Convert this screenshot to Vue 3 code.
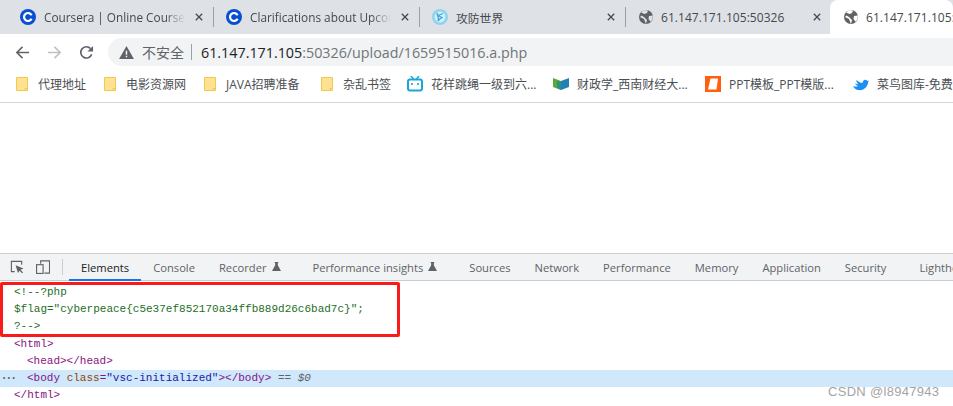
<script setup>
const tabs = [
  { title: 'Coursera | Online Courses & Credentials', icon: 'c' },
  { title: 'Clarifications about Upcoming', icon: 'c' },
  { title: '攻防世界', icon: 'w' },
  { title: '61.147.171.105:50326', icon: 'g' },
]
const marks = [
  { text: '代理地址', icon: 'folder', cls: 'm1' },
  { text: '电影资源网', icon: 'folder', cls: 'm2' },
  { text: 'JAVA招聘准备', icon: 'folder', cls: 'm3' },
  { text: '杂乱书签', icon: 'folder', cls: 'm4' },
  { text: '花样跳绳一级到六...', icon: 'tv', cls: 'm5' },
  { text: '财政学_西南财经大...', icon: 'book', cls: 'm6' },
  { text: 'PPT模板_PPT模版...', icon: 'ppt', cls: 'm7' },
  { text: '菜鸟图库-免费', icon: 'bird', cls: 'm8' },
]
const dtabs = [
  { t: 'Elements', active: true },
  { t: 'Console' },
  { t: 'Recorder', flask: true },
  { t: 'Performance insights', flask: true },
  { t: 'Sources' },
  { t: 'Network' },
  { t: 'Performance' },
  { t: 'Memory' },
  { t: 'Application' },
  { t: 'Security' },
  { t: 'Lighthouse', last: true },
]
</script>

<template>
  <div class="page">
    <div class="tabstrip">
      <div v-for="(t, i) in tabs" :key="i" class="tab">
        <svg v-if="t.icon === 'c'" class="fav" viewBox="0 0 16 16"><circle cx="8" cy="8" r="8" fill="#0a4fd0"/><path d="M11.600 6.200A4 4 0 1 0 11.600 9.800" fill="none" stroke="#fff" stroke-width="2.200"/></svg>
        <svg v-else-if="t.icon === 'w'" class="fav" viewBox="0 0 16 16"><circle cx="8" cy="8" r="8" fill="#8fd3ee"/><circle cx="8" cy="8" r="5.400" fill="#d5f0f9"/><path d="M11 4.500 6 6.500l4 2-4.500 3M5 4l2 8" fill="none" stroke="#3ca9d8" stroke-width="1.300"/></svg>
        <svg v-else class="fav" viewBox="0 0 16 16"><circle cx="8" cy="8" r="7" fill="#5f6368"/><path d="M3 3.500 6.500 5 9 4l1-2.600L6 1zM2 8l4 2 1 2.500L8 15 9 11 6 8 3.500 6.500zM11 7l3.800-.5-.3 4-2 2.200L10.500 10z" fill="#dee1e6"/></svg>
        <span class="tab-title" :class="{ fade: i < 2, num: i === 3 }">{{ t.title }}</span>
        <svg class="close" viewBox="0 0 10 10"><path d="M1 1l8 8M9 1l-8 8" stroke="#45494d" stroke-width="1.600"/></svg>
      </div>
      <div class="tab active">
        <svg class="fav" viewBox="0 0 16 16"><circle cx="8" cy="8" r="7" fill="#5f6368"/><path d="M3 3.500 6.500 5 9 4l1-2.600L6 1zM2 8l4 2 1 2.500L8 15 9 11 6 8 3.500 6.500zM11 7l3.800-.5-.3 4-2 2.200L10.500 10z" fill="#fff"/></svg>
        <span class="tab-title num">61.147.171.105:50326/upload</span>
      </div>
    </div>

    <div class="toolbar">
      <svg class="nav" viewBox="0 0 16 16"><path d="M15 8H2M8 2 2 8l6 6" fill="none" stroke="#5f6368" stroke-width="1.700"/></svg>
      <svg class="nav" viewBox="0 0 16 16"><path d="M1 8h13M8 2l6 6-6 6" fill="none" stroke="#bdc1c6" stroke-width="1.700"/></svg>
      <svg class="nav" viewBox="0 0 16 16"><path d="M13.500 10A6 6 0 1 1 12.300 3.800" fill="none" stroke="#5f6368" stroke-width="1.800"/><path d="M15 1v6H9z" fill="#5f6368"/></svg>
      <div class="omni">
        <svg class="warn" viewBox="0 0 16 14"><path d="M8 0 16 14H0z" fill="#5f6368"/><path d="M7.200 5h1.600v4.500H7.200zM7.200 10.500h1.600v1.600H7.200z" fill="#f1f3f4"/></svg>
        <span class="insecure">不安全</span>
        <span class="divider"></span>
        <span class="url"><b>61.147.171.105</b>:50326/upload/1659515016.a.php</span>
      </div>
    </div>

    <div class="bookmarks">
      <div v-for="m in marks" :key="m.text" class="mark" :class="m.cls">
        <svg v-if="m.icon === 'folder'" class="mk-ico" viewBox="0 0 12 14"><path d="M.5.500h11v13H.5z" fill="#fde293" stroke="#f2c94c"/><path d="M9 13.500v-2h2.500" fill="none" stroke="#f2c94c"/></svg>
        <svg v-else-if="m.icon === 'tv'" class="mk-ico wide" viewBox="0 0 16 16"><path d="M4 0l2.500 3M12 0 9.500 3" stroke="#18a6dc" stroke-width="1.500"/><rect x="1" y="3.500" width="14" height="11" rx="2" fill="#fff" stroke="#18a6dc" stroke-width="2"/><path d="M5 7v2M11 7v2" stroke="#18a6dc" stroke-width="1.600"/></svg>
        <svg v-else-if="m.icon === 'book'" class="mk-ico wide" viewBox="0 0 16 14"><path d="M0 1l8 3v9L0 10z" fill="#5aa83c"/><path d="M8 4l8-3v9l-8 3z" fill="#2180b4"/><path d="M4 4l4 1v8l-4-2z" fill="#2e8f84"/></svg>
        <svg v-else-if="m.icon === 'ppt'" class="mk-ico wide" viewBox="0 0 16 16"><rect width="16" height="16" fill="#ff5f0f"/><path d="M5.500 2.500H13l-1.500 11H3z" fill="#fff"/></svg>
        <svg v-else class="mk-ico wide" viewBox="0 0 16 14"><path d="M0 9c3 1 4 .5 5 0C3.500 8.500 2.500 7.500 2 6.500c2 1 3 .5 3 .5C4 6 3 4 3.500 3c2 2 4 3 6 3 0-3 3-4.500 5-2l1.500-.5-1 2C15 9 11 14 5.500 13 3 13 1 11 0 9z" fill="#1d8ff2"/></svg>
        <span class="mk-text">{{ m.text }}</span>
      </div>
    </div>

    <div class="viewport"></div>

    <div class="devtools">
      <div class="dt-bar">
        <svg class="dt-ico" viewBox="0 0 15 15"><path d="M5 12.500H1.500v-11h11V5" fill="none" stroke="#5f6368" stroke-width="1.200"/><path d="M6 5.500 14.500 9 11.300 10.400 14 13.300 13 14.300 10.300 11.400 8.500 14z" fill="#5f6368"/></svg>
        <svg class="dt-ico device" viewBox="0 0 15 15"><path d="M5 4V1h9.500v13H9" fill="none" stroke="#5f6368" stroke-width="1.200"/><rect x=".6" y="5" width="7" height="9.400" fill="none" stroke="#5f6368" stroke-width="1.200"/></svg>
        <span class="dt-sep"></span>
        <div class="dt-tabs">
          <div v-for="d in dtabs" :key="d.t" class="dt-tab" :class="{ on: d.active, last: d.last, lab: d.flask }">
            <span>{{ d.t }}</span>
            <svg v-if="d.flask" class="flask" viewBox="0 0 10 10"><path d="M3 0h4v1H6.500v2.500L10 10H0L3.500 3.500V1H3z" fill="#5f6368"/></svg>
          </div>
        </div>
      </div>
      <div class="dom">
        <div class="line l1"><span class="cm">&lt;!--?php</span></div>
        <div class="line l1"><span class="cm">$flag="cyberpeace{c5e37ef852170a34ffb889d26c6bad7c}";</span></div>
        <div class="line l1"><span class="cm">?--&gt;</span></div>
        <div class="line l1"><span class="tg">&lt;html&gt;</span></div>
        <div class="line l2"><span class="tg">&lt;head&gt;&lt;/head&gt;</span></div>
        <div class="line l2 sel"><span class="dots">•••</span><span class="tg">&lt;body</span> <span class="an">class</span><span class="tg">=</span><span class="av">"vsc-initialized"</span><span class="tg">&gt;&lt;/body&gt;</span> <span class="eq">== <i>$0</i></span></div>
        <div class="line l1"><span class="tg">&lt;/html&gt;</span></div>
        <div class="redbox"></div>
        <div class="mark-csdn">CSDN @l8947943</div>
      </div>
    </div>
  </div>
</template>

<style>
html, body { margin: 0; background: #fff; overflow: hidden; }
</style>

<style scoped>
.page {
  width: 953px; height: 406px; overflow: hidden; display: flex; flex-direction: column;
  font-family: "Open Sans", "Noto Sans CJK SC", sans-serif; background: #fff;
}
.tabstrip { height: 34px; flex: none; background: #dee1e6; display: flex; padding-left: 8px; box-sizing: border-box; }
.tab {
  width: 206px; flex: none; box-sizing: border-box; display: flex; align-items: center;
  padding: 0 9px 0 12px; position: relative;
}
.tab:not(:nth-child(4)):not(.active)::after {
  content: ""; position: absolute; right: 0; top: 7px; height: 20px; width: 1px; background: #9aa0a6;
}
.tab.active { background: #fff; border-radius: 8px 8px 0 0; margin-left: -2px; width: 123px; padding-left: 13px; padding-right: 0; }
.fav { width: 16px; height: 16px; flex: none; margin-right: 8px; }
.tab:nth-child(4) .fav, .tab.active .fav { margin-right: 7px; }
.tab-title { flex: 1; white-space: nowrap; overflow: hidden; font-size: 11.800px; color: #45494d; }
.tab-title.num { font-size: 12px; letter-spacing: .05px; }
.tab-title.fade { -webkit-mask-image: linear-gradient(90deg, #000 86%, transparent 100%); mask-image: linear-gradient(90deg, #000 86%, transparent 100%); }
.close { width: 8px; height: 8px; flex: none; margin-left: 10px; margin-right: 2px; }

.toolbar { height: 32px; flex: none; display: flex; align-items: flex-end; padding-left: 15px; box-sizing: border-box; }
.nav { width: 15px; height: 15px; margin-right: 17px; align-self: center; margin-top: 4px; flex: none; }
.nav:nth-child(3) { margin-right: 14px; }
.omni { width: 860px; height: 28px; background: #f1f3f4; border-radius: 14px 0 0 14px; display: flex; align-items: center; padding-left: 11px; box-sizing: border-box; }
.warn { width: 15px; height: 13px; margin-right: 8px; flex: none; }
.insecure { font-size: 14px; color: #5f6368; }
.divider { width: 1px; height: 16px; background: #9aa0a6; margin: 0 9px 0 7px; }
.url { font-size: 14.300px; color: #70757a; white-space: nowrap; font-family: "Open Sans", sans-serif; }
.url b { font-weight: 400; color: #202124; }

.bookmarks { height: 37px; flex: none; display: flex; align-items: center; padding-left: 16px; box-sizing: border-box; border-bottom: 1px solid #d5d6d8; white-space: nowrap; }
.mark { display: flex; align-items: center; flex: none; font-size: 12px; color: #4a4e52; }
.mk-ico { width: 12px; height: 14px; margin-right: 10px; flex: none; }
.mk-ico.wide { width: 16px; height: 16px; margin-right: 8px; }
.m1 { width: 88px; } .m2 { width: 100px; } .m3 { width: 117px; } .m4 { width: 86px; }
.m5 { width: 146px; } .m6 { width: 152px; } .m7 { width: 148px; } .m8 { width: 110px; }

.viewport { height: 150px; flex: none; }

.devtools { flex: 1; display: flex; flex-direction: column; min-height: 0; }
.dt-bar { height: 28px; flex: none; box-sizing: border-box; background: #f1f3f4; border-top: 1px solid #cbcdd1; border-bottom: 1px solid #cbcdd1; display: flex; align-items: center; padding-left: 10px; white-space: nowrap; }
.dt-ico { width: 14px; height: 14px; flex: none; margin-right: 12px; }
.dt-sep { width: 1px; height: 16px; background: #cbcdd1; flex: none; margin-right: 6px; }
.dt-tabs { display: flex; height: 100%; }
.dt-tab { padding: 0 12px; height: 100%; box-sizing: border-box; display: flex; align-items: center; font-size: 11.200px; color: #5f6368; position: relative; }
.dt-tab.lab { padding-right: 20px; }
.dt-tab.on { color: #202124; }
.dt-tab.on::after { content: ""; position: absolute; left: 0; right: 0; bottom: -1px; height: 2px; background: #1a73e8; }
.dt-tab.last { margin-left: 9px; }
.flask { width: 9px; height: 9px; margin-left: 5px; margin-top: -2px; }

.dom { position: relative; flex: 1; padding-top: 3px; font-family: "Liberation Mono", monospace; font-size: 11px; overflow: hidden; }
.line { height: 17.200px; line-height: 17.200px; white-space: pre; position: relative; }
.l1 { padding-left: 14px; } .l2 { padding-left: 27px; }
.cm { color: #236e25; }
.tg { color: #881280; }
.an { color: #994500; }
.av { color: #1a1aa6; }
.eq { color: #5f6368; }
.sel { background: #cfe8fc; }
.dots { position: absolute; left: 2px; color: #5f6368; font-size: 7px; letter-spacing: .5px; }
.redbox { position: absolute; left: 0; top: 1px; width: 400px; height: 55px; box-sizing: border-box; border: 3px solid #f91a1a; border-radius: 2px; }
.mark-csdn { position: absolute; left: 828px; top: 103px; font-family: "Liberation Sans", sans-serif; font-size: 13px; letter-spacing: .3px; color: #a4a4a4; }
</style>
